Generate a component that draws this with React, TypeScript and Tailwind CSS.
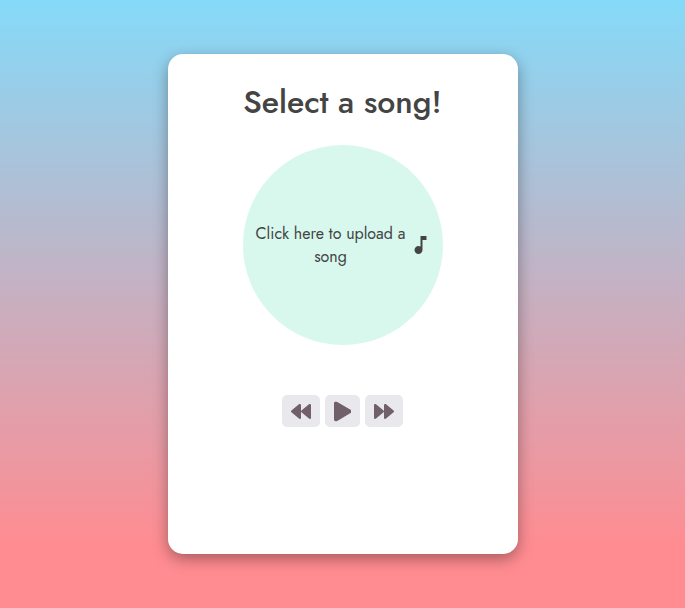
import { FaBackward, FaForward, FaPlay } from "react-icons/fa";
import { MdMusicNote } from "react-icons/md";

const controlClass = "flex h-8 items-center justify-center rounded-[5px] bg-[#e9e9ed] text-[#715f6c]";

export default function App() {
  return (
    <main className="flex h-[608px] w-full items-center justify-center bg-linear-to-b/srgb from-[#85daf9] to-[#ff8c91] to-90% font-['Jost','Lato',sans-serif] text-[#444444]">
      <section className="flex h-[500px] w-[350px] flex-col items-center rounded-[15px] bg-white shadow-[0_5px_15px_rgba(0,0,0,0.35)]">
        <h1 className="mt-6 flex h-12 items-center whitespace-nowrap text-[32px] font-medium">
          Select a song!
        </h1>
        <label className="mt-[19px] flex size-[200px] cursor-pointer items-center rounded-full bg-[#d8f8ee] pl-3">
          <span className="w-[152px] text-center text-[16px] leading-[23px]">
            Click here to upload a song
          </span>
          <MdMusicNote className="ml-[1.5px] size-6 translate-x-[0.5px]" />
        </label>
        <div className="mt-[50px] flex gap-[5px]">
          <button className={`${controlClass} w-[38px]`} aria-label="Previous"><FaBackward className="size-5 translate-y-[0.4px]" /></button>
          <button className={`${controlClass} w-[35px]`} aria-label="Play"><FaPlay className="h-5 w-[17.5px] translate-y-[0.4px]" /></button>
          <button className={`${controlClass} w-[38px]`} aria-label="Next"><FaForward className="size-5 translate-y-[0.4px]" /></button>
        </div>
      </section>
    </main>
  );
}
